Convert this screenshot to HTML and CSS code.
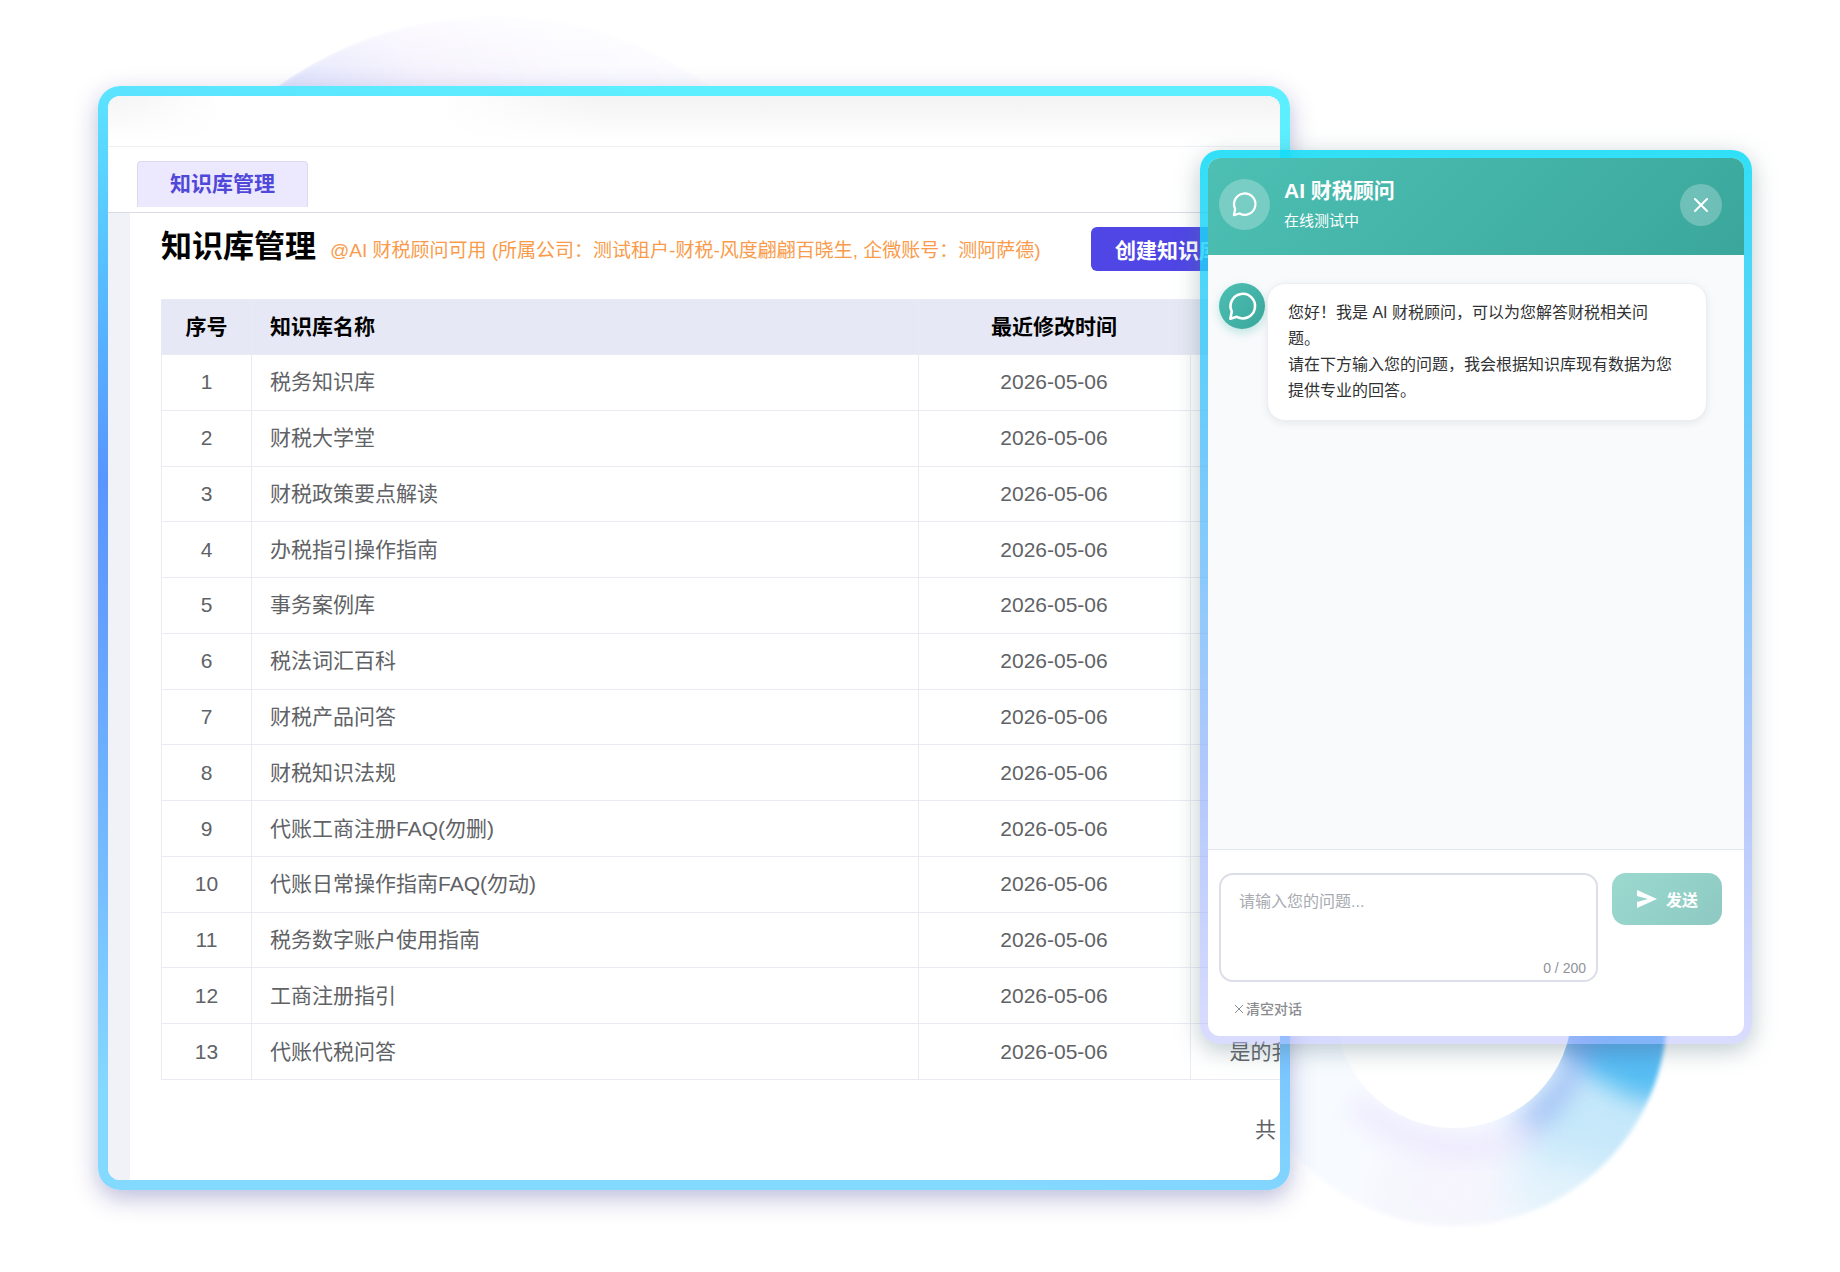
FILE: index.html
```html
<!DOCTYPE html>
<html lang="zh-CN">
<head>
    <meta charset="UTF-8">
    <meta name="viewport" content="width=device-width, initial-scale=1.0">
    <title>知识库管理</title>
    <link rel="stylesheet" href="styles.css">
</head>
<body>
    <div class="disc"></div>
    <svg class="ring" viewBox="0 0 440 440" aria-hidden="true">
        <defs>
            <filter id="edge">
                <feGaussianBlur stdDeviation="2"/>
            </filter>
            <mask id="ringMask">
                <circle cx="220" cy="220" r="213" fill="#fff" filter="url(#edge)"/>
                <circle cx="220" cy="217" r="118" fill="#000"/>
            </mask>
            <filter id="soft" x="-60%" y="-60%" width="220%" height="220%">
                <feGaussianBlur stdDeviation="22"/>
            </filter>
            <filter id="softer" x="-50%" y="-50%" width="200%" height="200%">
                <feGaussianBlur stdDeviation="12"/>
            </filter>
        </defs>
        <g mask="url(#ringMask)">
            <rect width="440" height="440" fill="#f7fbff"/>
            <ellipse cx="220" cy="400" rx="80" ry="60" fill="#f6f5fd" filter="url(#soft)"/>
            <ellipse cx="370" cy="340" rx="85" ry="80" fill="#c6e8fa" filter="url(#soft)"/>
            <ellipse cx="330" cy="400" rx="60" ry="30" fill="#e4f3fc" filter="url(#soft)"/>
            <path d="M325 200H460L436 310 400 306 350 280Z" fill="#56bdf3" filter="url(#softer)"/>
            <rect x="320" y="190" width="130" height="70" fill="#4fa6f6" opacity=".8" filter="url(#softer)"/>
            <path d="M352 225Q342 300 285 338" fill="none" stroke="#7f9df0" stroke-width="20" opacity=".6" filter="url(#softer)"/>
            <path d="M300 335Q215 385 120 310" fill="none" stroke="#ebe6fd" stroke-width="24" opacity=".8" filter="url(#softer)"/>
        </g>
    </svg>

    <main class="panel">
        <div class="panel-inner">
            <div class="topbar"></div>
            <nav class="tabs">
                <a href="#" class="tab">知识库管理</a>
            </nav>
            <div class="body">
                <div class="content">
                    <div class="toolbar">
                        <h1>知识库管理</h1>
                        <p class="hint">@AI 财税顾问可用 (所属公司：测试租户-财税-风度翩翩百晓生, 企微账号：测阿萨德)</p>
                        <button type="button" class="create">创建知识库</button>
                    </div>
                    <table>
                        <thead>
                            <tr><th class="no">序号</th><th class="name">知识库名称</th><th class="date">最近修改时间</th><th class="more"></th></tr>
                        </thead>
                        <tbody>
                            <tr><td>1</td><td class="name">税务知识库</td><td>2026-05-06</td><td></td></tr>
                            <tr><td>2</td><td class="name">财税大学堂</td><td>2026-05-06</td><td></td></tr>
                            <tr><td>3</td><td class="name">财税政策要点解读</td><td>2026-05-06</td><td></td></tr>
                            <tr><td>4</td><td class="name">办税指引操作指南</td><td>2026-05-06</td><td></td></tr>
                            <tr><td>5</td><td class="name">事务案例库</td><td>2026-05-06</td><td></td></tr>
                            <tr><td>6</td><td class="name">税法词汇百科</td><td>2026-05-06</td><td></td></tr>
                            <tr><td>7</td><td class="name">财税产品问答</td><td>2026-05-06</td><td></td></tr>
                            <tr><td>8</td><td class="name">财税知识法规</td><td>2026-05-06</td><td></td></tr>
                            <tr><td>9</td><td class="name">代账工商注册FAQ(勿删)</td><td>2026-05-06</td><td></td></tr>
                            <tr><td>10</td><td class="name">代账日常操作指南FAQ(勿动)</td><td>2026-05-06</td><td></td></tr>
                            <tr><td>11</td><td class="name">税务数字账户使用指南</td><td>2026-05-06</td><td></td></tr>
                            <tr><td>12</td><td class="name">工商注册指引</td><td>2026-05-06</td><td></td></tr>
                            <tr><td>13</td><td class="name">代账代税问答</td><td>2026-05-06</td><td class="note">是的我</td></tr>
                        </tbody>
                    </table>
                    <div class="pager">共</div>
                </div>
            </div>
        </div>
    </main>

    <section class="chat">
        <div class="chat-inner">
            <header class="chat-head">
                <span class="head-icon">
                    <svg width="27" height="27" viewBox="0 0 24 24" fill="none" stroke="currentColor" stroke-width="2" stroke-linecap="round" stroke-linejoin="round"><path d="M7.6 20A9.5 9.5 0 1 0 3.7 15.9L2.6 21.4Z"/></svg>
                </span>
                <div class="head-text">
                    <h2>AI 财税顾问</h2>
                    <p>在线测试中</p>
                </div>
                <button type="button" class="close" aria-label="关闭">
                    <svg width="20" height="20" viewBox="0 0 20 20" fill="none" stroke="currentColor" stroke-width="2" stroke-linecap="round"><path d="M4 4l12 12M16 4L4 16"/></svg>
                </button>
            </header>
            <div class="messages">
                <span class="avatar">
                    <svg width="31" height="31" viewBox="0 0 24 24" fill="none" stroke="currentColor" stroke-width="2" stroke-linecap="round" stroke-linejoin="round"><path d="M7.6 20A9.5 9.5 0 1 0 3.7 15.9L2.6 21.4Z"/></svg>
                </span>
                <div class="bubble">
                    <p>您好！我是 AI 财税顾问，可以为您解答财税相关问题。</p>
                    <p>请在下方输入您的问题，我会根据知识库现有数据为您提供专业的回答。</p>
                </div>
            </div>
            <form class="chat-foot">
                <div class="row">
                    <div class="field">
                        <textarea id="question" aria-label="问题" maxlength="200" placeholder="请输入您的问题..."></textarea>
                        <span class="count">0 / 200</span>
                    </div>
                    <button type="button" class="send">
                        <svg width="22" height="22" viewBox="0 0 22 22" fill="currentColor"><path d="M1 2l20 9L1 20v-6l11-3L1 8z"/></svg>
                        发送
                    </button>
                </div>
                <button type="button" class="clear">
                    <svg width="10" height="10" viewBox="0 0 10 10" fill="none" stroke="currentColor"><path d="M1 1l8 8M9 1L1 9"/></svg>
                    清空对话
                </button>
            </form>
        </div>
    </section>

    <script>
        const question=document.getElementById("question")
        const count=document.querySelector(".count")

        question.addEventListener("input",()=>{
            count.textContent=`${question.value.length} / 200`
        })

        document.querySelector(".clear").addEventListener("click",()=>{
            question.value=""
            count.textContent="0 / 200"
        })
    </script>
</body>
</html>
```
FILE: styles.css
```css
*{
    padding: 0;
    margin: 0;
    box-sizing: border-box;
}
body{
    position: relative;
    min-height: 100vh;
    padding: 86px 550px 82px 98px;
    background-color: #fff;
    font-family: "Liberation Sans", "Noto Sans CJK SC", sans-serif;
    overflow-x: hidden;
}
button, textarea{
    font-family: inherit;
    border: none;
}
svg{
    display: block;
    flex-shrink: 0;
}

/* background shapes */
.disc{
    position: absolute;
    left: 126px;
    top: 16px;
    width: 736px;
    height: 736px;
    border-radius: 50%;
    background: radial-gradient(circle at 60px 160px, #bcc6f8 0, #dfe4fd 120px, #f6f2fd 260px, #faf9ff 400px, #fdfdff 600px);
    -webkit-mask-image: linear-gradient(rgba(0,0,0,.3), #000 60px);
    mask-image: linear-gradient(rgba(0,0,0,.3), #000 60px);
    filter: blur(2px);
}
.ring{
    position: absolute;
    right: 166px;
    top: 793px;
    width: 440px;
    height: 440px;
}

/* main panel */
.panel{
    position: relative;
    padding: 10px;
    border-radius: 22px;
    background: linear-gradient(186deg, #5cefff 6%, #57bcff 26%, #5896ff 42%, #629efd 52%, #76beff 75%, #84d9ff 92%);
    box-shadow: 0 8px 24px rgba(84,84,166,.4);
}
.panel-inner{
    overflow: hidden;
    border-radius: 12px;
    background-color: #fff;
}
.topbar{
    height: 51px;
    border-bottom: 1px solid #eef0f4;
    background: linear-gradient(rgba(255,255,255,0), #fff 90%), linear-gradient(90deg, #f4f4f4, #fff 10%, #fff 28%, #f3f3f3 42%);
}
.tabs{
    display: flex;
    padding: 14px 29px 5px;
    border-bottom: 1px solid #d9dce6;
}
.tab{
    height: 46px;
    padding: 0 32px;
    border: 1px solid #dcdaee;
    border-bottom: none;
    border-radius: 4px 4px 0 0;
    background-color: #ece9fe;
    color: #5048d8;
    font-size: 21px;
    font-weight: bold;
    line-height: 44px;
    text-decoration: none;
}
.body{
    padding-left: 22px;
    background-color: #f0f2f7;
}
.content{
    padding: 14px 0 34px 31px;
    background-color: #fff;
}
.toolbar{
    display: flex;
    align-items: baseline;
    gap: 14px;
    height: 44px;
    margin-bottom: 28px;
    white-space: nowrap;
}
h1{
    font-size: 31px;
    line-height: 40px;
}
.hint{
    color: #f99b4b;
    font-size: 19px;
}
.create{
    align-self: stretch;
    margin: 0 36px 0 auto;
    padding: 0 24px;
    border-radius: 6px;
    background-color: #4f46e5;
    color: #fff;
    font-size: 21px;
    font-weight: bold;
}
table{
    width: 100%;
    height: 781px;
    border-collapse: collapse;
    table-layout: fixed;
    color: #606266;
    font-size: 21px;
    line-height: 30px;
    text-align: center;
    white-space: nowrap;
}
th, td{
    height: 55px;
    border: 1px solid #e9ebf4;
}
th:last-child, td:last-child{
    border-right: none;
}
th{
    background-color: #e6e9f5;
    color: #000;
}
.no{
    width: 90px;
}
.date{
    width: 272px;
}
.more{
    width: 90px;
}
.name{
    padding-left: 18px;
    text-align: left;
}
.note{
    padding-left: 39px;
    text-align: left;
}
.pager{
    margin-top: 34px;
    padding-right: 4px;
    color: #606266;
    font-size: 21px;
    line-height: 32px;
    text-align: right;
}

/* chat window */
.chat{
    position: absolute;
    top: 150px;
    right: 88px;
    width: 30%;
    height: 894px;
    padding: 8px;
    border-radius: 20px;
    background: linear-gradient(rgba(14,219,246,.86), rgba(75,189,249,.8) 32%, rgba(146,176,250,.7) 70%, rgba(182,186,253,.5));
    box-shadow: 0 6px 24px rgba(90,120,130,.4);
}
.chat-inner{
    display: flex;
    flex-direction: column;
    height: 100%;
    overflow: hidden;
    border-radius: 12px;
    background-color: #fff;
}
.chat-head{
    display: flex;
    align-items: center;
    height: 97px;
    padding: 0 22px 4px 11px;
    background: linear-gradient(135deg, #4dbfb3, #3ba79c);
    color: #fff;
}
.head-icon, .avatar, .close{
    display: flex;
    align-items: center;
    justify-content: center;
    flex-shrink: 0;
    border-radius: 50%;
    color: #fff;
}
.head-icon{
    width: 51px;
    height: 51px;
    background-color: rgba(255,255,255,.25);
}
.head-text{
    flex: 1;
    margin-left: 14px;
    padding-top: 3px;
}
h2{
    font-size: 21px;
    line-height: 30px;
}
.head-text p{
    font-size: 15px;
    line-height: 30px;
}
.close{
    width: 42px;
    height: 42px;
    background-color: rgba(255,255,255,.25);
}
.messages{
    display: flex;
    flex: 1;
    align-items: flex-start;
    gap: 2px;
    padding: 28px 37px 28px 11px;
    background-color: #f9fafc;
}
.avatar{
    width: 46px;
    height: 46px;
    background: linear-gradient(135deg, #4dbfb3, #3ba79c);
    box-shadow: 0 4px 10px rgba(77,191,179,.35);
}
.bubble{
    flex: 1;
    padding: 16px 32px 16px 20px;
    border: 1px solid #eceef1;
    border-radius: 18px;
    background-color: #fff;
    box-shadow: 0 2px 8px rgba(0,0,0,.08);
    color: #303133;
    font-size: 16px;
    line-height: 26px;
}
.chat-foot{
    padding: 23px 22px 16px 11px;
    border-top: 1px solid #e3e6ec;
}
.row{
    display: flex;
    align-items: flex-start;
    gap: 14px;
}
.field{
    position: relative;
    flex: 1;
}
textarea{
    display: block;
    width: 100%;
    height: 109px;
    padding: 15px 18px;
    border: 2px solid #dddfe8;
    border-radius: 14px;
    color: #303133;
    font-size: 16px;
    line-height: 24px;
    resize: none;
}
textarea::placeholder{
    color: #a8abb2;
}
.count{
    position: absolute;
    right: 12px;
    bottom: 6px;
    color: #909399;
    font-size: 14px;
}
.send{
    display: flex;
    align-items: center;
    justify-content: center;
    gap: 8px;
    width: 110px;
    height: 52px;
    border-radius: 14px;
    background: linear-gradient(135deg, #9bd9cf, #8dc9c2);
    color: #fff;
    font-size: 16px;
    font-weight: bold;
}
.clear{
    display: flex;
    align-items: center;
    gap: 2px;
    margin-top: 16px;
    padding: 0 15px;
    background: none;
    color: #8a8c90;
    font-size: 14px;
    font-weight: 500;
    line-height: 22px;
}
```
